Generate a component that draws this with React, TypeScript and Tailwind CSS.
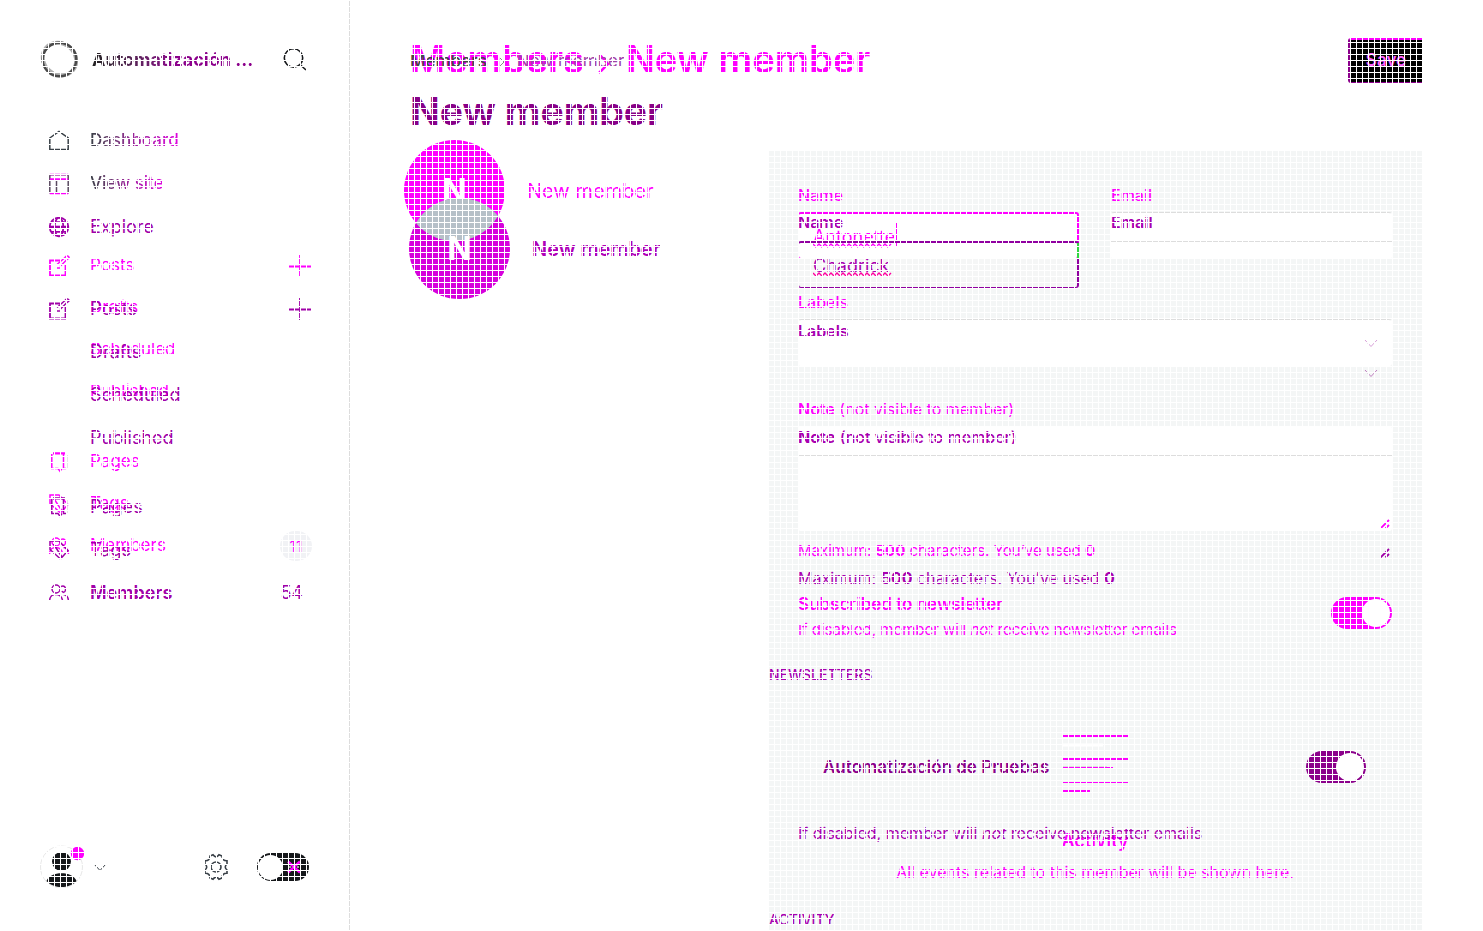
import type { ReactNode } from 'react';

const OLD = '#ff00ff';
const NEW = '#a000a8';

type IconProps = { color: string };

function Icon({ color, children }: { color: string; children: ReactNode }) {
  return (
    <svg width="22" height="22" viewBox="0 0 22 22" fill="none" stroke={color} strokeWidth="1.5" aria-hidden="true">
      {children}
    </svg>
  );
}

const HomeIcon = ({ color }: IconProps) => (
  <Icon color={color}><path d="M1.8 8 L11 1.5 L20.2 8 V19.5 H1.8 Z" /></Icon>
);
const LayoutIcon = ({ color }: IconProps) => (
  <Icon color={color}><rect x="1.8" y="1.8" width="18.4" height="18.4" rx="1" /><path d="M1.8 6.500 H20.2" stroke="#ff00ff" strokeWidth="2.500" /><path d="M1.8 1.500 H20.2 M1.8 20.500 H20.2" stroke="#ff00ff" /><path d="M8.500 7 V20" /></Icon>
);
const GlobeIcon = ({ color }: IconProps) => (
  <Icon color={color}><g strokeWidth="1.8"><circle cx="11" cy="11" r="9.3" /><ellipse cx="11" cy="11" rx="4.3" ry="9.3" /><path d="M1.7 11 H20.3" strokeWidth="2.6" /><path d="M3 6.2 H19 M3 15.8 H19" /></g></Icon>
);
const EditIcon = ({ color }: IconProps) => (
  <Icon color={color}><path d="M13 5.500 H2 V20.500 H17.500 V9" strokeWidth="1.8" /><path d="M9 9.500 L17 2.500 M12 11.500 L19.500 4 M17 2.500 Q19 0 20.500 1.500 T19.500 4 M9 13 H13" /></Icon>
);
const PageIcon = ({ color }: IconProps) => (
  <Icon color={color}><path d="M5 2 H17 M3.8 3 V17.500 H10 L12 20.2 L14 17.500 M15.500 3 V17.500 M5 2.8 H17 M15 17.500 H18" /><path d="M19 4 V17" stroke="#dddddd" /></Icon>
);
const TagIcon = ({ color }: IconProps) => (
  <Icon color={color}><path d="M2 2 H11 L20 11.500 L12.500 20 L2 10.500 Z" /><path d="M5.500 5 L14 18" /></Icon>
);
const MembersIcon = ({ color }: IconProps) => (
  <Icon color={color}><circle cx="8" cy="7" r="4" /><path d="M1.5 19 C2 13 5 12.5 8 12.5 S13.5 14 14.5 18 M13 4.5 C16 3 18 5 17.5 8 S14.5 10.5 14 9 M15.5 12.5 C19 13 20.3 15 20.5 19" /></Icon>
);
const PlusIcon = ({ color }: IconProps) => (
  <svg width="22" height="22" viewBox="0 0 22 22" stroke={color} strokeWidth="1.8" aria-hidden="true"><path d="M11 0 V22 M0 11.5 H22" /></svg>
);
const Chevron = ({ color }: IconProps) => (
  <svg width="14" height="9" viewBox="0 0 14 9" fill="none" stroke={color} aria-hidden="true"><path d="M1 1 L7 7.5 L13 1" /></svg>
);
const Squiggle = ({ color }: IconProps) => (
  <svg className="absolute left-[15px] top-[31px]" width="80" height="5" viewBox="0 0 80 5" fill="none" stroke={color} strokeWidth="1.4" aria-hidden="true">
    <path d="M0 1 L3 4 L6 1 L9 4 L12 1 L15 4 L18 1 L21 4 L24 1 L27 4 L30 1 L33 4 L36 1 L39 4 L42 1 L45 4 L48 1 L51 4 L54 1 L57 4 L60 1 L63 4 L66 1 L69 4 L72 1 L75 4 L78 1" />
  </svg>
);

const rowStyles = {
  old: 'h-[42px] text-[17px] text-[#ff00ff]',
  new: 'h-[43px] text-[18px] text-[#a000a8]',
  both: 'h-[43px] text-[17px] font-medium',
};

function Item({ icon, children, end, layer, strong }: { icon?: ReactNode; children: ReactNode; end?: ReactNode; layer: 'old' | 'new' | 'both'; strong?: boolean }) {
  const tone = layer === 'both' ? 'bg-gradient-to-r from-[#394047] via-[#9a209a] to-[#e000e0] bg-clip-text text-transparent' : '';
  return (
    <li className={`flex items-center ${rowStyles[layer]}`}>
      <span className="w-[42px] shrink-0">{icon}</span>
      <a href="#" className={`flex-1 ${strong ? 'font-semibold' : ''}`}><span className={tone}>{children}</span></a>
      {end}
    </li>
  );
}

function Sidebar() {
  return (
    <aside className="flex w-[350px] shrink-0 flex-col justify-between border-r border-[#dddddd] pb-[42px] pl-10 pr-10 pt-[39px]">
      <div>
        <header className="flex h-10 items-center">
          <svg width="40" height="40" viewBox="0 0 40 40" fill="none" aria-hidden="true">
            <ellipse cx="19.5" cy="20" rx="17.5" ry="15.5" stroke="#b0b0b0" strokeWidth="4" transform="rotate(40 19.5 20)" />
            <circle cx="19.5" cy="20.5" r="16.8" stroke="#4a4a4a" strokeWidth="2.4" />
          </svg>
          <h2 className="ml-3 flex-1 whitespace-nowrap text-[18px] font-bold">
            <span className="bg-gradient-to-r from-[#222222] via-[#8b008b] to-[#8b008b] bg-clip-text text-transparent">Automatización ...</span>
          </h2>
          <button type="button" aria-label="Search">
            <svg width="26" height="24" viewBox="0 0 26 24" fill="none" stroke="#15171a" strokeWidth="1.6"><circle cx="10.5" cy="11" r="9.2" /><path d="M17 17.5 L23 23" /></svg>
          </button>
        </header>
        <nav className="-mr-0.5 mt-10 grid pl-2" aria-label="Main">
          <ul className="col-start-1 row-start-1">
            <li className="h-[126px]" aria-hidden="true" />
            <Item layer="old" icon={<EditIcon color={OLD} />} end={<PlusIcon color={OLD} />}>Posts</Item>
            <Item layer="old">Drafts</Item>
            <Item layer="old">Scheduled</Item>
            <Item layer="old">Published</Item>
            <li className="h-7" aria-hidden="true" />
            <Item layer="old" icon={<PageIcon color={OLD} />}>Pages</Item>
            <Item layer="old" icon={<TagIcon color={OLD} />}>Tags</Item>
            <Item layer="old" icon={<MembersIcon color={OLD} />} end={<span className="-mr-px flex h-[30px] w-8 items-center justify-center rounded-full bg-[#f1f2f5] text-[16px]">11</span>}>Members</Item>
          </ul>
          <ul className="col-start-1 row-start-1">
            <Item layer="both" icon={<HomeIcon color="#394047" />}>Dashboard</Item>
            <Item layer="both" icon={<LayoutIcon color="#5a4a60" />}>View site</Item>
            <Item layer="new" icon={<GlobeIcon color={NEW} />}>Explore</Item>
            <li className="h-[39px]" aria-hidden="true" />
            <Item layer="new" icon={<EditIcon color={NEW} />} end={<PlusIcon color={NEW} />}>Posts</Item>
            <Item layer="new">Drafts</Item>
            <Item layer="new">Scheduled</Item>
            <Item layer="new">Published</Item>
            <li className="h-[26px]" aria-hidden="true" />
            <Item layer="new" icon={<PageIcon color={NEW} />}>Pages</Item>
            <Item layer="new" icon={<TagIcon color={NEW} />}>Tags</Item>
            <Item layer="new" strong icon={<MembersIcon color={NEW} />} end={<span className="mr-2">54</span>}>Members</Item>
          </ul>
        </nav>
      </div>
      <footer className="flex items-center">
        <button type="button" aria-label="Account" className="flex items-center">
          <svg width="53" height="44" viewBox="0 0 53 44" aria-hidden="true">
            <circle cx="21.5" cy="22" r="21" fill="none" stroke="#e8e8e8" />
            <circle cx="21.5" cy="16.5" r="9.5" fill="#15171a" />
            <path d="M6.5 36 C10 25.5 33 25.5 36.5 36 C29 44 14 44 6.5 36 Z" fill="#15171a" />
            <circle cx="37.5" cy="8.5" r="6.7" fill="#ff00ff" />
          </svg>
          <Chevron color="#394047" />
        </button>
        <button type="button" aria-label="Settings" className="ml-auto mr-7">
          <svg width="26" height="28" viewBox="0 0 26 28" fill="none" stroke="#394047" strokeWidth="1.6">
            <circle cx="13" cy="14" r="5" />
            <path d="M10 1.8 Q13 6 16 1.8 L19 3 Q19 8 24 7.8 V11 Q20.5 14 24 17 V20.2 Q19 20 19 25 L16 26.2 Q13 22 10 26.2 L7 25 Q7 20 2 20.2 V17 Q5.5 14 2 11 V7.8 Q7 8 7 3 Z" />
          </svg>
        </button>
        <button type="button" role="switch" aria-checked="false" aria-label="Night mode" className="flex h-7 w-[52px] items-center justify-between rounded-full bg-[#15171a] px-px">
          <span className="size-[25px] rounded-full bg-white" />
          <svg className="mr-1.5" width="16" height="14" viewBox="0 0 16 14" stroke="#ff00ff" strokeWidth="2.5" aria-hidden="true"><path d="M2 1.5 L14 12.5 M14 1.5 L2 12.5" /><path d="M3 7 H13" stroke="#cccccc" strokeWidth="1.5" strokeDasharray="2 2" /></svg>
        </button>
      </footer>
    </aside>
  );
}

function Profiles() {
  return (
    <div className="grid content-start">
      <div className="col-start-1 row-start-1 -ml-1.5 -mt-[11px] flex h-[101px] items-center gap-[22px] text-[#ff00ff]">
        <span className="flex size-[101px] items-center justify-center rounded-full bg-[#ff00ff] text-[32px] font-bold text-white">N</span>
        <h3 className="text-[20px]">New member</h3>
      </div>
      <div className="col-start-1 row-start-1 -ml-px mt-[47px] flex items-center gap-[22px] text-[#b000b8]">
        <span className="relative flex size-[101px] items-center justify-center overflow-hidden rounded-full bg-[#d600dc] text-[32px] font-bold text-white">
          <span className="absolute -left-[5px] -top-[58px] size-[101px] rounded-full bg-[#b6c0c8]" />
          <span className="relative">N</span>
        </span>
        <h3 className="text-[20px] font-semibold">New member</h3>
      </div>
    </div>
  );
}

const ResizeGrip = ({ color }: IconProps) => (
  <svg width="10" height="10" viewBox="0 0 10 10" stroke={color} strokeWidth="1.8" aria-hidden="true"><path d="M0.5 9.5 L9 1 M5.5 9.5 L9 6" /></svg>
);

function PreviousForm() {
  return (
    <form className="col-start-1 row-start-1 flex flex-col pl-[29px] pr-[30px] pt-8 text-[16px] leading-6 text-[#ff00ff]">
      <div className="grid grid-cols-2 gap-8">
        <div className="flex flex-col gap-[5px]">
          <label htmlFor="old-name" className="font-medium">Name</label>
          <div className="relative">
            <input id="old-name" defaultValue="Antonette" spellCheck={false} className="h-[47px] w-full rounded-[3px] border border-t-2 border-r-2 border-[#ff00ff] bg-white px-3.5 text-[18px] outline-none" />
            <Squiggle color={OLD} />
            <span className="absolute left-[98px] top-[11px] h-6 w-px bg-[#ff00ff]" />
          </div>
        </div>
        <div className="flex flex-col gap-[5px]">
          <label htmlFor="old-email" className="font-medium">Email</label>
          <input id="old-email" className="h-[47px] w-full rounded-[3px] border border-white border-t-[#dddddd] bg-white px-3.5 outline-none" />
        </div>
      </div>
      <label htmlFor="old-labels" className="mt-[31px] font-medium">Labels</label>
      <div className="relative mt-[5px] flex">
        <select id="old-labels" className="h-[47px] w-full appearance-none rounded-[3px] border border-white border-t-[#dddddd] bg-white" />
        <span className="absolute right-3.5 top-5"><Chevron color="#d8a0d8" /></span>
      </div>
      <label htmlFor="old-note" className="mt-[31px]"><span className="font-semibold">Note</span> (not visible to member)</label>
      <div className="relative mt-[5px] flex">
        <textarea id="old-note" className="h-[105px] w-full resize-none rounded-[3px] bg-white outline-none" />
        <span className="absolute bottom-0.5 right-0.5"><ResizeGrip color={OLD} /></span>
      </div>
      <p className="mt-2 text-[15px]">Maximum: <b>500</b> characters. You’ve used <b>0</b></p>
      <div className="mt-[29px] flex justify-between">
        <div>
          <h4 className="text-[17px] font-semibold">Subscribed to newsletter</h4>
          <p className="mt-0.5 text-[15px]">If disabled, member will <i>not</i> receive newsletter emails</p>
        </div>
        <button type="button" role="switch" aria-checked="true" aria-label="Subscribed to newsletter" className="mt-[5px] flex h-8 w-[61px] justify-end rounded-full bg-[#ff00ff] p-0.5">
          <span className="size-7 rounded-full bg-white" />
        </button>
      </div>
      <div className="mt-[91px] flex flex-col items-center">
        <svg width="65" height="60" viewBox="0 0 65 60" aria-hidden="true">
          <path d="M0 3 H65 M0 26 H65 M0 58 H27" stroke={OLD} strokeWidth="2" />
          <path d="M0 34.5 H50 M0 49.5 H65" stroke={OLD} />
          <path d="M0 33.5 H44" stroke="#dddddd" />
          <path d="M0 12 H40" stroke="#ffffff" strokeWidth="3" />
        </svg>
        <h4 className="mt-9 text-[18px] font-semibold">Activity</h4>
        <p className="mt-[7px]">All events related to this member will be shown here.</p>
      </div>
    </form>
  );
}

function CurrentForm() {
  return (
    <form className="relative col-start-1 row-start-1 flex flex-col pt-[59px] text-[16px] leading-6 text-[#a800b0]">
      <div className="flex flex-col pl-[29px] pr-[30px]">
        <div className="grid grid-cols-2 gap-8">
          <div className="flex flex-col gap-[7px]">
            <label htmlFor="name" className="font-semibold">Name</label>
            <div className="relative">
              <input id="name" defaultValue="Chadrick" spellCheck={false} className="h-[47px] w-full rounded-[3px] border border-r-2 border-t-2 border-[#9000a0] bg-[linear-gradient(transparent_16px,#f5f6f6_16px)] px-3.5 text-[18px] outline-none" />
              <Squiggle color="#ff00a0" />
              <span className="absolute left-0 top-0.5 h-[15px] w-px bg-[#2fd83f]" />
              <span className="absolute right-0 top-0.5 h-[15px] w-0.5 bg-[#2fd83f]" />
            </div>
          </div>
          <div className="flex flex-col gap-[7px]">
            <label htmlFor="email" className="font-semibold">Email</label>
            <input id="email" className="h-[47px] w-full border-t border-[#dddddd] bg-transparent outline-none" />
          </div>
        </div>
        <label htmlFor="labels" className="mt-[31px] font-semibold">Labels</label>
        <div className="relative mt-[7px] flex">
          <select id="labels" className="h-[47px] w-full appearance-none bg-transparent" />
          <span className="absolute right-3.5 top-[19px]"><Chevron color="#c080c0" /></span>
        </div>
        <label htmlFor="note" className="mt-[28px]"><span className="font-bold">Note</span> <span className="font-medium">(not visible to member)</span></label>
        <div className="relative mt-[6px] flex">
          <textarea id="note" className="h-[105px] w-full resize-none border-t border-[#dddddd] bg-transparent outline-none" />
          <span className="absolute bottom-0.5 right-0.5"><ResizeGrip color={NEW} /></span>
        </div>
        <p className="mt-1.5">Maximum: <b>500</b> characters. You’ve used <b>0</b></p>
      </div>
      <h4 className="mt-[73px] text-[14px] font-medium uppercase">Newsletters</h4>
      <div className="mt-14 flex h-12 items-center justify-between pl-[54px] pr-14">
        <span className="text-[17px] font-semibold text-[#8b008b]">Automatización de Pruebas</span>
        <button type="button" role="switch" aria-checked="true" aria-label="Automatización de Pruebas" className="flex h-8 w-[60px] justify-end rounded-full bg-[#8b008b] p-0.5">
          <span className="size-7 rounded-full bg-white" />
        </button>
      </div>
      <p className="mt-[30px] pl-[29px] pr-[30px]">If disabled, member will <i>not</i> receive newsletter emails</p>
      <h4 className="mt-[63px] text-[14px] font-medium uppercase">Activity</h4>
    </form>
  );
}

export default function App() {
  return (
    <div className="relative flex h-screen overflow-hidden bg-white font-['Inter',sans-serif]">
      <Sidebar />
      <main className="flex min-w-0 flex-1 flex-col overflow-hidden pb-px pl-[60px] pr-[61px] pt-[38px]">
        <header className="flex h-[113px] shrink-0 items-start justify-between">
          <div className="grid">
            <div className="col-start-1 row-start-1 flex h-[43px] items-center text-[38px] font-semibold text-[#ff00ff]">
              <span>Members</span>
              <svg className="mx-2" width="26" height="40" viewBox="0 0 26 40" fill="none" stroke={OLD} strokeWidth="2.5" aria-hidden="true"><path d="M8 15 L16 24 L7 33" /></svg>
              <span>New member</span>
            </div>
            <div className="col-start-1 row-start-1">
              <nav className="flex h-[47px] items-center text-[17px] text-[#a040a8]" aria-label="Breadcrumb">
                <a href="#" className="font-medium text-[#444444]">Members</a>
                <svg className="mx-2.5" width="10" height="10" viewBox="0 0 10 10" fill="none" stroke="#888888" aria-hidden="true"><path d="M3 1 L7 5 L3 9" /></svg>
                <span>New member</span>
              </nav>
              <h1 className="text-[39px] font-bold leading-[52px] text-[#880088]">New member</h1>
            </div>
          </div>
          <button type="button" className="h-[45px] w-[74px] rounded-l-[3px] border border-l-2 border-r-0 border-t-2 border-[#8b008b] border-t-[#ff00ff] bg-black text-[17px] font-semibold text-[#ff60ff]">Save</button>
        </header>
        <div className="grid min-h-0 flex-1 grid-cols-[359px_1fr]">
          <Profiles />
          <section className="grid min-h-0 content-start overflow-hidden bg-[#f4f6f6]">
            <PreviousForm />
            <CurrentForm />
          </section>
        </div>
      </main>
      <div className="pointer-events-none absolute inset-0 bg-[linear-gradient(to_right,#ffffff_1px,transparent_1px),linear-gradient(to_bottom,#ffffff_1px,transparent_1px)] bg-[size:6px_6px]" />
    </div>
  );
}
